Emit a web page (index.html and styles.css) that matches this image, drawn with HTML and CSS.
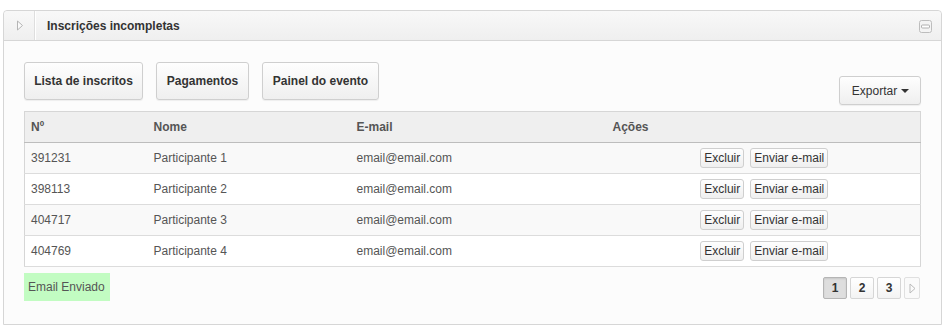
FILE: index.html
```html
<!doctype html>
<html>
  <head>
    <title>Inscrições incompletas</title>
    <meta charset="UTF-8">
    <link rel="stylesheet" href="styles.css">
  </head>
  <body>
    <div class="panel">
      <div class="panel-header">
        <div class="toggle">
          <svg width="8" height="11" viewBox="0 0 8 11"><path d="M1.5 1 L6.5 5.5 L1.5 10 Z" fill="#fafafa" stroke="#b5b5b5" stroke-width="1"/></svg>
        </div>
        <h3 class="title">Inscrições incompletas</h3>
        <div class="minimize">
          <svg width="13" height="13" viewBox="0 0 13 13">
            <rect x="0.5" y="0.5" width="12" height="12" rx="2" fill="#f4f4f4" stroke="#bdbdbd"/>
            <rect x="2.5" y="5" width="8" height="3" rx="1" fill="#fff" stroke="#b0b0b0"/>
          </svg>
        </div>
      </div>

      <div class="panel-body">
        <div class="toolbar">
          <div class="nav-buttons">
            <a class="btn btn-big btn-list">Lista de inscritos</a>
            <a class="btn btn-big btn-pay">Pagamentos</a>
            <a class="btn btn-big btn-panel">Painel do evento</a>
          </div>
          <a class="btn btn-export">Exportar <span class="caret"></span></a>
        </div>

        <table class="grid">
          <thead>
            <tr>
              <th class="col-num">Nº</th>
              <th class="col-name">Nome</th>
              <th class="col-mail">E-mail</th>
              <th>Ações</th>
            </tr>
          </thead>
          <tbody>
            <tr class="odd">
              <td>391231</td>
              <td>Participante 1</td>
              <td>email@email.com</td>
              <td class="actions"><a class="btn btn-small">Excluir</a><a class="btn btn-small">Enviar e-mail</a></td>
            </tr>
            <tr>
              <td>398113</td>
              <td>Participante 2</td>
              <td>email@email.com</td>
              <td class="actions"><a class="btn btn-small">Excluir</a><a class="btn btn-small">Enviar e-mail</a></td>
            </tr>
            <tr class="odd">
              <td>404717</td>
              <td>Participante 3</td>
              <td>email@email.com</td>
              <td class="actions"><a class="btn btn-small">Excluir</a><a class="btn btn-small">Enviar e-mail</a></td>
            </tr>
            <tr>
              <td>404769</td>
              <td>Participante 4</td>
              <td>email@email.com</td>
              <td class="actions"><a class="btn btn-small">Excluir</a><a class="btn btn-small">Enviar e-mail</a></td>
            </tr>
          </tbody>
        </table>

        <div class="footer-row">
          <span class="notice">Email Enviado</span>
          <div class="pager">
            <a class="page active">1</a>
            <a class="page">2</a>
            <a class="page">3</a>
            <a class="page next">
              <svg width="7" height="11" viewBox="0 0 7 11"><path d="M1 1 L6 5.5 L1 10 Z" fill="#fafafa" stroke="#bbb" stroke-width="1"/></svg>
            </a>
          </div>
        </div>
      </div>
    </div>
  </body>
</html>
```

FILE: styles.css
```css
* {
  box-sizing: border-box;
}

body {
  margin: 0;
  background: #fff;
  font-family: "Liberation Sans", Arial, Helvetica, sans-serif;
  font-size: 12px;
  color: #555;
}

/* Panel */
.panel {
  margin: 10px 0 0 3px;
  width: 939px;
  border: 1px solid #d6d6d6;
  border-radius: 4px 4px 0 0;
  background: #fcfcfc;
}

.panel-header {
  display: flex;
  align-items: center;
  height: 30px;
  border-bottom: 1px solid #d6d6d6;
  background: linear-gradient(#f8f8f8, #efefef);
  border-radius: 4px 4px 0 0;
}

.toggle {
  width: 31px;
  height: 100%;
  display: flex;
  align-items: center;
  justify-content: center;
  border-right: 1px solid #dedede;
  box-shadow: 1px 0 0 #fff;
  padding-left: 2px;
}

.title {
  flex: 1;
  margin: 0 0 0 12px;
  font-size: 12px;
  font-weight: bold;
  color: #333;
}

.minimize {
  display: flex;
  margin-right: 9px;
  margin-top: 1px;
}

.panel-body {
  padding: 21px 20px 23px 20px;
}

/* Buttons */
.btn {
  display: inline-flex;
  align-items: center;
  justify-content: center;
  border: 1px solid #cfcfcf;
  border-radius: 3px;
  background: linear-gradient(#fefefe, #efefef);
  color: #333;
  text-decoration: none;
  cursor: pointer;
}

.toolbar {
  display: flex;
  justify-content: space-between;
  align-items: flex-start;
}

.nav-buttons {
  display: flex;
  gap: 13px;
}

.btn-big {
  height: 38px;
  padding: 0;
  font-weight: bold;
  box-shadow: 0 1px 1px rgba(0, 0, 0, 0.06);
}

.btn-list { width: 119px; }
.btn-pay { width: 93px; }
.btn-panel { width: 117px; }

.btn-export {
  margin-top: 14px;
  width: 82px;
  height: 29px;
  padding: 0 0 0 1px;
  box-shadow: 0 1px 1px rgba(0, 0, 0, 0.06);
}

.caret {
  display: inline-block;
  margin-left: 4px;
  margin-top: 1px;
  border-left: 4px solid transparent;
  border-right: 4px solid transparent;
  border-top: 4px solid #333;
}

/* Table */
.grid {
  width: 100%;
  margin-top: 6px;
  border-collapse: collapse;
  border: 1px solid #d6d6d6;
  background: #fff;
}

.grid th,
.grid td {
  height: 31px;
  padding: 0 6px;
  text-align: left;
  border-bottom: 1px solid #dcdcdc;
}

.grid th {
  background: #efefef;
  font-weight: bold;
  color: #555;
  border-bottom: 1px solid #bdbdbd;
}

.col-num { width: 123px; }
.col-name { width: 203px; }
.col-mail { width: 256px; }

.grid tr.odd td {
  background: #f9f9f9;
}

.grid td.actions {
  text-align: center;
  padding-right: 4px;
}

.btn-small {
  height: 20px;
  padding: 0 3px;
  margin: 0 3px;
}

/* Footer */
.footer-row {
  display: flex;
  justify-content: space-between;
  align-items: flex-start;
  margin-top: 6px;
}

.notice {
  display: inline-flex;
  align-items: center;
  height: 28px;
  padding: 0 5px 0 4px;
  background: #c2fcc2;
  color: #555;
}

.pager {
  display: flex;
  gap: 3px;
  margin-top: 4px;
  margin-right: 1px;
}

.page {
  display: flex;
  align-items: center;
  justify-content: center;
  width: 24px;
  height: 22px;
  border: 1px solid #d6d6d6;
  border-radius: 2px;
  background: linear-gradient(#fff, #f3f3f3);
  font-weight: bold;
  color: #333;
}

.page.active {
  background: #dedede;
  border-color: #b5b5b5;
  box-shadow: inset 0 1px 2px rgba(0, 0, 0, 0.1);
}

.page.next {
  width: 16px;
  background: #fafafa;
  border-color: #e0e0e0;
}
```
